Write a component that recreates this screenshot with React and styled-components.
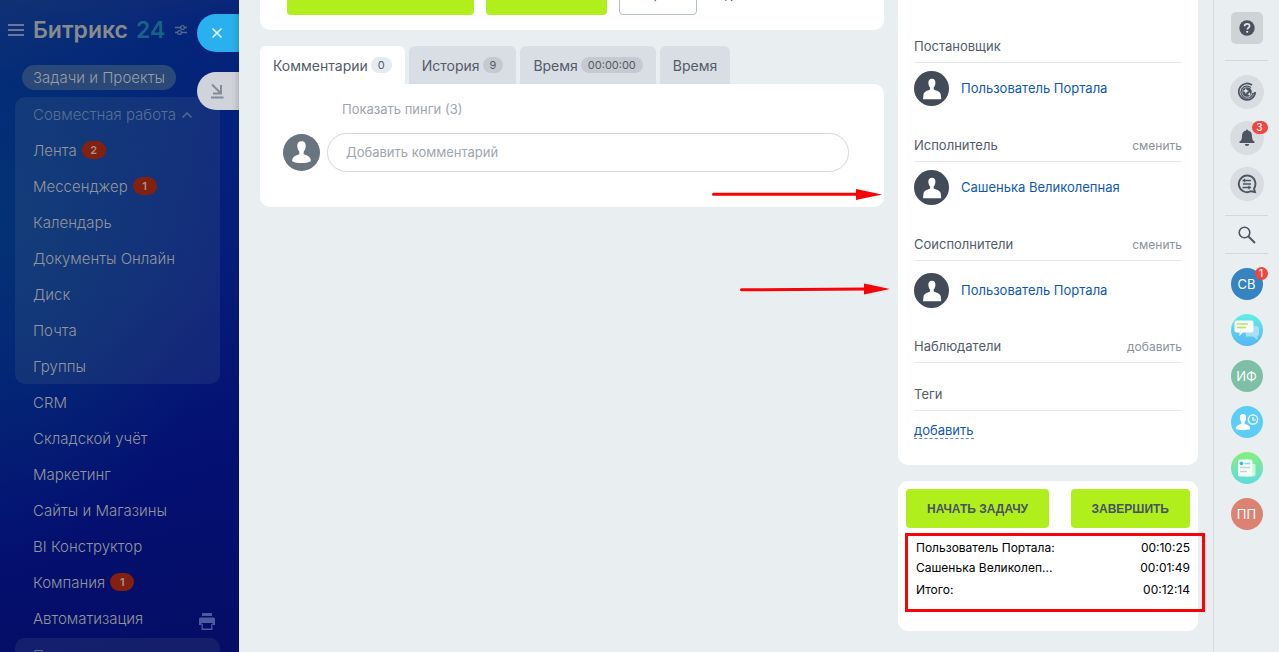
// BASIC
import React from 'react'
import styled, { createGlobalStyle } from 'styled-components'

const GlobalStyle = createGlobalStyle`
	* {
		box-sizing: border-box;
	}
	body {
		margin: 0;
		font-family: Inter, "Open Sans", sans-serif;
		font-size: 13px;
		color: #525c69;
		background: #e9eff1;
	}
	button, input {
		font-family: inherit;
		margin: 0;
	}
	button {
		padding: 0;
		border: 0;
		background: none;
		cursor: pointer;
	}
	a {
		text-decoration: none;
	}
`
const Page = styled.div`
	display: flex;
	height: 100vh;
	overflow: hidden;
`

// SIDEBAR
const Sidebar = styled.aside`
	position: relative;
	flex: 0 0 239px;
	overflow: hidden;
	background:
		radial-gradient(ellipse 220px 340px at 0 220px, rgba(3, 54, 116, 0.8), rgba(3, 48, 116, 0) 100%),
		linear-gradient(165deg, #172e74 0, #04247a 12%, #051d78 45%, #041072 72%, #050d64 100%);
`
const Header = styled.header`
	display: flex;
	align-items: center;
	height: 60px;
	padding-left: 8px;
`
const Logo = styled.a`
	margin: 0 10px 0 9px;
	font-size: 23px;
	font-weight: 600;
	line-height: 30px;
	white-space: nowrap;
	color: #878b8f;
`
const LogoNumber = styled.span`
	margin-left: 8px;
	color: #18628a;
`
const Pill = styled.a`
	display: block;
	width: fit-content;
	height: 25px;
	margin: 5px 0 7px 22px;
	padding: 0 11px;
	border-radius: 13px;
	font-size: 15px;
	font-weight: 300;
	line-height: 25px;
	color: #9a9da1;
	background: #2a4878;
`
const Group = styled.div`
	margin: 0 19px 0 15px;
	padding: 0 18px;
	border-radius: 10px;
	background: ${props => props.$plain ? 'none' : 'rgba(120, 150, 150, 0.13)'};
`
const GroupTitle = styled.button`
	display: flex;
	align-items: center;
	gap: 6px;
	height: 35px;
	font-size: 15px;
	font-weight: 300;
	white-space: nowrap;
	color: #587092;
`
const MenuItem = styled.a`
	display: flex;
	align-items: center;
	gap: 5px;
	height: 36px;
	font-size: 15px;
	font-weight: 300;
	white-space: nowrap;
	color: #92969b;
`
const MenuBadge = styled.span`
	width: 24px;
	height: 18px;
	border-radius: 9px;
	font-size: 11px;
	font-weight: 600;
	line-height: 18px;
	text-align: center;
	color: #a09690;
	background: #84200f;
`
const PrintButton = styled.button`
	position: absolute;
	right: 24px;
	top: 613px;
	width: 16px;
	height: 17px;
`
const PanelTab = styled.button`
	position: absolute;
	right: 0;
	top: ${props => props.$top}px;
	width: 42px;
	height: 38px;
	padding-left: 12px;
	border-radius: 19px 0 0 19px;
	text-align: left;
	background: ${props => props.$primary ? '#2ab0ee' : '#d0d3da'};
	box-shadow: inset -6px 0 6px -5px rgba(0, 0, 0, 0.2);
	svg {
		display: block;
	}
`

// CONTENT
const Content = styled.div`
	display: flex;
	flex: 1;
	gap: 14px;
	min-width: 0;
	padding: 0 15px 0 21px;
`
const Main = styled.main`
	position: relative;
	flex: 1;
	min-width: 0;
`
const ActionsCard = styled.section`
	display: flex;
	align-items: flex-end;
	gap: 12px;
	height: 30px;
	margin-bottom: 16px;
	padding: 0 27px 15px;
	border-radius: 0 0 10px 10px;
	background: #fff;
`
const GreenButton = styled.button`
	flex-shrink: 0;
	height: 39px;
	padding: 0 ${props => props.$pad || 21}px;
	border-radius: 4px;
	font-family: "Liberation Sans", Arial, sans-serif;
	font-size: 12px;
	font-weight: bold;
	white-space: nowrap;
	color: #475263;
	background: #b0ef1c;
`
const OutlineButton = styled(GreenButton)`
	padding: 0 13px 2px;
	border: 1px solid #b6bec6;
	font-family: inherit;
	font-weight: normal;
	background: #fff;
`
const TextButton = styled(OutlineButton)`
	padding: 0 8px 2px;
	border-color: transparent;
	background: none;
`
const Tabs = styled.div`
	display: flex;
	gap: 4px;
	height: 38px;
`
const Tab = styled.button`
	display: flex;
	align-items: center;
	gap: 3px;
	padding: 0 13px;
	border-radius: 6px 6px 0 0;
	font-size: 14px;
	white-space: nowrap;
	color: #525c69;
	background: ${props => props.$active ? '#fff' : '#d9dde4'};
`
const TabCount = styled.span`
	height: 16px;
	padding: 0 7px;
	border-radius: 8px;
	font-size: 11px;
	line-height: 16px;
	background: ${props => props.$active ? '#e6ebf3' : '#c6cad0'};
`
const Comments = styled.section`
	height: 123px;
	padding: 16px 35px 0 23px;
	border-radius: 0 10px 10px 10px;
	background: #fff;
`
const Pings = styled.button`
	display: block;
	height: 18px;
	margin-left: 59px;
	font-size: 13px;
	color: #a0a5ad;
`
const CommentRow = styled.div`
	display: flex;
	align-items: center;
	gap: 7px;
	margin-top: 15px;
`
const CommentInput = styled.input`
	flex: 1;
	min-width: 0;
	height: 39px;
	padding: 0 18px 2px;
	border: 1px solid #d5d8dc;
	border-radius: 20px;
	font-size: 13px;
	background: #fff;
	&::placeholder {
		color: #a0a6ae;
		opacity: 1;
	}
`
const Arrow = styled.svg`
	position: absolute;
	right: ${props => props.$right}px;
	top: ${props => props.$top}px;
	z-index: 2;
`

// DETAILS
const Details = styled.aside`
	flex: 0 0 300px;
`
const PeopleCard = styled.section`
	height: 465px;
	padding: 30px 16px 0;
	border-radius: 0 0 10px 10px;
	background: #fff;
`
const FieldTitle = styled.div`
	display: flex;
	justify-content: space-between;
	align-items: center;
	height: 33px;
	border-bottom: 1px solid #e6e8ea;
`
const Change = styled.button`
	font-size: 12px;
	color: #8c939c;
`
const Person = styled.div`
	display: flex;
	align-items: center;
	gap: 12px;
	height: ${props => props.$tall ? 69 : 66}px;
	padding: ${props => props.$tall ? '12px 0 22px' : '8px 0 23px'};
	a {
		padding-bottom: 2px;
		color: #1058b5;
	}
`
const Spacer = styled.div`
	height: ${props => props.$height}px;
`
const AddTag = styled.a`
	display: inline-block;
	height: 17px;
	margin-top: 11px;
	line-height: 16px;
	color: #1058b5;
	border-bottom: 1px dashed #5a8bcb;
`
const TimerCard = styled.section`
	position: relative;
	height: 150px;
	margin-top: 16px;
	padding: 8px;
	border-radius: 10px;
	background: #fff;
`
const Buttons = styled.div`
	display: flex;
	justify-content: space-between;
`
const TimeTable = styled.table`
	width: 100%;
	margin-top: 9px;
	border-collapse: collapse;
	font-size: 12px;
	color: #000;
	td, th {
		height: 20px;
		padding: 0 0 0 10px;
		font-weight: 400;
		text-align: left;
	}
	td {
		text-align: right;
	}
	tr:last-child > * {
		height: 24px;
	}
`
const Highlight = styled.div`
	position: absolute;
	left: 7px;
	right: -7px;
	top: 52px;
	height: 79px;
	border: 3px solid #f60408;
`

// RAIL
const Rail = styled.nav`
	display: flex;
	flex: 0 0 66px;
	flex-direction: column;
	align-items: center;
	padding-top: 12px;
	border-left: 1px solid #d2d8dc;
`
const Help = styled.button`
	width: 32px;
	height: 32px;
	border-radius: 5px;
	background: #ced3d5;
	svg {
		display: block;
		margin: auto;
	}
`
const Line = styled.div`
	width: 43px;
	height: 1px;
	flex-shrink: 0;
	background: #d3d8db;
`
const RailGroup = styled.div`
	display: flex;
	flex-direction: column;
	gap: ${props => props.$gap}px;
	padding: ${props => props.$padding};
`
const RailButton = styled.button`
	position: relative;
	display: flex;
	align-items: center;
	justify-content: center;
	width: ${props => props.$size || 32}px;
	height: ${props => props.$size || 32}px;
	border-radius: 50%;
	font-size: 13px;
	color: #fff;
	background: ${props => props.$bg};
`
const Count = styled.span`
	position: absolute;
	right: ${props => props.$wide ? -4 : -5}px;
	top: ${props => props.$wide ? 0 : -1}px;
	width: ${props => props.$wide ? 16 : 13}px;
	height: 13px;
	border-radius: 7px;
	font-size: 10px;
	font-weight: 500;
	line-height: 13px;
	text-align: center;
	color: #fff;
	background: #f2453f;
`

const UserIcon = ({ size, bg, round }) => (
	<svg width={size} height={size} viewBox="0 0 36 36" style={{ flexShrink: 0 }}>
		<circle cx="18" cy="18" r="18" fill={bg} />
		{round ? (
			<path fill="#fff" d="M18 7c3 0 4.300 2 4.100 5-.1 2.500-1 4-2 5.200v2.600c3.500 1.500 7 2 7 6.700-4 2.400-14.200 2.400-18.200 0 0-4.700 3.500-5.200 7-6.700v-2.600c-1-1.200-1.900-2.700-2-5.200C13.700 9 15 7 18 7z" />
		) : (
			<path fill="#fff" d="M18.500 8c2.600 0 3.800 2 3.500 4.500-.2 2-.8 3.300-1.700 4.300v2.200c3.200 1.300 6.400 2 7.200 5l.5 5H9.300l.5-5c.8-3 3.700-3.700 6.700-5v-2.200c-1-1-1.500-2.300-1.700-4.300C14.500 10 16 8 18.500 8z" />
		)}
	</svg>
)

const team = [
	{ title: 'Лента', count: 2 },
	{ title: 'Мессенджер', count: 1 },
	{ title: 'Календарь' },
	{ title: 'Документы Онлайн' },
	{ title: 'Диск' },
	{ title: 'Почта' },
	{ title: 'Группы' },
]
const sections = [
	{ title: 'CRM' },
	{ title: 'Складской учёт' },
	{ title: 'Маркетинг' },
	{ title: 'Сайты и Магазины' },
	{ title: 'BI Конструктор' },
	{ title: 'Компания', count: 1 },
	{ title: 'Автоматизация' },
]
const times = [
	['Пользователь Портала:', '00:10:25'],
	['Сашенька Великолеп...', '00:01:49'],
	['Итого:', '00:12:14'],
]

const Menu = ({ items }) => items.map(item => (
	<MenuItem href="#" key={item.title}>
		{item.title}
		{item.count && <MenuBadge>{item.count}</MenuBadge>}
	</MenuItem>
))

const Field = ({ title, action }) => (
	<FieldTitle>
		<span>{title}</span>
		{action && <Change>{action}</Change>}
	</FieldTitle>
)

const App = () => (
	<Page>
		<GlobalStyle />
		<Sidebar>
			<Header>
				<button aria-label="Меню">
					<svg width="16" height="14" viewBox="0 0 16 14" style={{ display: 'block' }}>
						<path d="M0 2h16M0 7h16M0 12h16" stroke="#68779a" strokeWidth="2" />
					</svg>
				</button>
				<Logo href="#">Битрикс<LogoNumber>24</LogoNumber></Logo>
				<svg width="12" height="12" viewBox="0 0 12 12" fill="none" stroke="#53688f" strokeWidth="1.300">
					<path d="M0 3.500h5.500M9.500 3.500H12M0 8.500h2.500M6.500 8.500H12" />
					<circle cx="7.500" cy="3.500" r="1.900" />
					<circle cx="4.500" cy="8.500" r="1.900" />
				</svg>
			</Header>
			<Pill href="#">Задачи и Проекты</Pill>
			<Group>
				<GroupTitle>
					Совместная работа
					<svg width="10" height="6" viewBox="0 0 10 6" fill="none" stroke="#51698c" strokeWidth="1.500">
						<path d="M.5 5.500L5 1l4.500 4.500" />
					</svg>
				</GroupTitle>
				<Menu items={team} />
			</Group>
			<Group $plain>
				<Menu items={sections} />
			</Group>
			<Spacer $height={2} />
			<Group>
				<GroupTitle>Приложения</GroupTitle>
			</Group>
			<PrintButton aria-label="Печать">
				<svg width="16" height="17" viewBox="0 0 16 17" fill="#4c5a9f">
					<path d="M3 0h10v3H3zM1.500 4.500h13a1.500 1.500 0 0 1 1.500 1.500v6h-2.500v-2h-11v2H0V6a1.500 1.500 0 0 1 1.500-1.500z" />
					<path d="M2.500 11h1.300v4.500h8.400V11h1.300v6h-11z" />
				</svg>
			</PrintButton>
			<PanelTab $primary $top={14} aria-label="Закрыть">
				<svg width="16" height="16" viewBox="0 0 16 16">
					<path d="M3.500 3.500l9 9M12.500 3.500l-9 9" stroke="#e6f8ff" strokeWidth="1.600" />
				</svg>
			</PanelTab>
			<PanelTab $top={72} aria-label="Свернуть">
				<svg width="16" height="16" viewBox="0 0 16 16" fill="none" stroke="#858b99" strokeWidth="2">
					<path d="M3 1.500l8.500 8.500M12 2v8.500H4M2 14.500h12.500" />
				</svg>
			</PanelTab>
		</Sidebar>

		<Content>
			<Main>
				<ActionsCard>
					<GreenButton $pad={23}>НАЧАТЬ ВЫПОЛНЕНИЕ</GreenButton>
					<GreenButton $pad={22}>ЗАВЕРШИТЬ</GreenButton>
					<OutlineButton>Закрыть</OutlineButton>
					<TextButton>Удалить</TextButton>
				</ActionsCard>
				<Tabs>
					<Tab $active>Комментарии <TabCount $active>0</TabCount></Tab>
					<Tab>История <TabCount>9</TabCount></Tab>
					<Tab>Время <TabCount>00:00:00</TabCount></Tab>
					<Tab>Время</Tab>
				</Tabs>
				<Comments>
					<Pings>Показать пинги (3)</Pings>
					<CommentRow>
						<UserIcon size={37} bg="#69747f" round />
						<CommentInput type="text" aria-label="Комментарий" placeholder="Добавить комментарий" />
					</CommentRow>
				</Comments>
				<Arrow $right={2} $top={188} width="170" height="13" viewBox="0 0 170 13">
					<path d="M1.500 6.300H146" stroke="#f60408" strokeWidth="3" strokeLinecap="round" />
					<path d="M144 1l26 5.500-26 5.500z" fill="#f60408" />
				</Arrow>
				<Arrow $right={-6} $top={283} width="151" height="13" viewBox="0 0 151 13">
					<path d="M2.500 6.800L127 6" stroke="#f60408" strokeWidth="3" strokeLinecap="round" />
					<path d="M125 .5L151 6l-26 5.500z" fill="#f60408" />
				</Arrow>
			</Main>

			<Details>
				<PeopleCard>
					<Field title="Постановщик" />
					<Person>
						<UserIcon size={35} bg="#434b59" />
						<a href="#">Пользователь Портала</a>
					</Person>
					<Field title="Исполнитель" action="сменить" />
					<Person>
						<UserIcon size={35} bg="#434b59" />
						<a href="#">Сашенька Великолепная</a>
					</Person>
					<Field title="Соисполнители" action="сменить" />
					<Person $tall>
						<UserIcon size={35} bg="#434b59" />
						<a href="#">Пользователь Портала</a>
					</Person>
					<Field title="Наблюдатели" action="добавить" />
					<Spacer $height={15} />
					<Field title="Теги" />
					<AddTag href="#">добавить</AddTag>
				</PeopleCard>
				<TimerCard>
					<Buttons>
						<GreenButton>НАЧАТЬ ЗАДАЧУ</GreenButton>
						<GreenButton>ЗАВЕРШИТЬ</GreenButton>
					</Buttons>
					<TimeTable>
						<tbody>
							{times.map(([name, time]) => (
								<tr key={name}>
									<th scope="row">{name}</th>
									<td>{time}</td>
								</tr>
							))}
						</tbody>
					</TimeTable>
					<Highlight />
				</TimerCard>
			</Details>
		</Content>

		<Rail>
			<Help aria-label="Помощь">
				<svg width="16" height="16" viewBox="0 0 16 16">
					<circle cx="8" cy="8" r="7.700" fill="#4a515e" />
					<path d="M5.600 6.300c0-1.500 1-2.400 2.500-2.400s2.500.9 2.500 2.100c0 1.700-2.300 1.700-2.300 3.400" fill="none" stroke="#e0e4e6" strokeWidth="1.700" />
					<circle cx="8.200" cy="11.800" r="1.100" fill="#e0e4e6" />
				</svg>
			</Help>
			<RailGroup $gap={12} $padding="16px 0 0">
				<Line />
			</RailGroup>
			<RailGroup $gap={12} $padding="14px 0 14px">
				<RailButton $size={34} $bg="#d9dde2" aria-label="CoPilot">
					<svg width="20" height="20" viewBox="0 0 20 20" fill="none">
						<path d="M15 3.200A8.200 8.200 0 1 0 18.200 10" stroke="#4d5563" strokeWidth="1.700" />
						<path d="M14 5.600a6 6 0 1 0 2 5.200c.4 1.800 2.200 1.200 2.200-.8" stroke="#4d5563" strokeWidth="1.200" />
						<circle cx="10" cy="10" r="4.800" fill="#4d5563" />
						<path d="M8.800 6l.9 2.100 2.100.9-2.100.9-.9 2.100-.9-2.100-2.100-.9 2.100-.9zM12.300 10.300l.6 1.200 1.200.6-1.200.6-.6 1.200-.6-1.200-1.200-.6 1.200-.6z" fill="#e3e7eb" />
					</svg>
				</RailButton>
				<RailButton $size={34} $bg="#d9dde2" aria-label="Уведомления">
					<svg width="16" height="18" viewBox="0 0 16 18" fill="#4d5563">
						<path d="M7 1.500a1 1 0 0 1 2 0C12 2 13 4.500 13 7c0 3 .5 4.500 2.500 5.500v1.500H.5v-1.500C2.500 11.500 3 10 3 7c0-2.500 1-5 4-5.500zM5.800 15h4.400a2.200 2 0 0 1-4.400 0z" />
					</svg>
					<Count $wide>3</Count>
				</RailButton>
				<RailButton $size={34} $bg="#d9dde2" aria-label="Чаты">
					<svg width="20" height="20" viewBox="0 0 20 20" fill="none" stroke="#4d5563">
						<path d="M17 14.500A8.300 8.300 0 1 0 14 17.200l4 .8z" strokeWidth="1.900" />
						<path d="M5.500 6.500H14M7.500 4.700v3.600M6 10h8M5.500 13.500H14M12 11.700v3.600" strokeWidth="1.400" />
					</svg>
				</RailButton>
			</RailGroup>
			<Line />
			<RailGroup $gap={0} $padding="3px 0 2px">
				<RailButton $bg="none" aria-label="Поиск">
					<svg width="18" height="18" viewBox="0 0 18 18" fill="none" stroke="#4d5563">
						<circle cx="6.500" cy="6.500" r="5.300" strokeWidth="1.600" />
						<path d="M10.500 10.500l6.500 6.500" strokeWidth="2" />
					</svg>
				</RailButton>
			</RailGroup>
			<Line />
			<RailGroup $gap={14} $padding="14px 0 0">
				<RailButton $bg="#3583c1">СВ<Count>1</Count></RailButton>
				<RailButton $bg="linear-gradient(#63efe3, #55b5f4)" aria-label="Общий чат">
					<svg width="26" height="22" viewBox="0 0 26 22">
						<path d="M12 7h11a2 2 0 0 1 2 2v6a2 2 0 0 1-1.500 2v4l-4-3.500H12z" fill="#a7def8" />
						<path d="M2.500 1.500h15a2 2 0 0 1 2 2v8a2 2 0 0 1-2 2H9L5.500 17v-3.500h-3a2 2 0 0 1-2-2v-8a2 2 0 0 1 2-2z" fill="#f6fdfb" />
						<path d="M3 5h11M3 8.500h9" stroke="#b9e25e" strokeWidth="1.600" />
					</svg>
				</RailButton>
				<RailButton $bg="#7dbfa7">ИФ</RailButton>
				<RailButton $bg="#5ccef6" aria-label="Рабочее время">
					<svg width="24" height="20" viewBox="0 0 24 20">
						<path d="M8 2c2.300 0 3.300 1.500 3.100 4-.1 1.800-.7 3-1.500 4v1.800c2.800 1.100 5.400 1.700 5.600 5.200-3.500 1.500-11 1.500-14.500 0 .2-3.500 3-4.100 5.700-5.200V10C5.500 9 5 7.800 4.900 6 4.700 3.500 5.700 2 8 2z" fill="#fff" />
						<circle cx="18" cy="7.500" r="4.600" fill="none" stroke="#fff" strokeWidth="1.400" />
						<path d="M18 5v3h2.700" fill="none" stroke="#fff" strokeWidth="1.200" />
					</svg>
				</RailButton>
				<RailButton $bg="linear-gradient(#86ef7d, #5fdbe0)" aria-label="Новости">
					<svg width="20" height="20" viewBox="0 0 20 20">
						<path d="M14 6h3.500a1 1 0 0 1 1 1v9a2.500 2.500 0 0 1-2.500 2.500H8z" fill="#c6f6e0" />
						<rect x="1" y="1.500" width="14.500" height="17" rx="2" fill="#f2fdf8" />
						<circle cx="4.500" cy="5.500" r="1.800" fill="#35b8cf" />
						<path d="M7.500 5.500H13" stroke="#80dce6" strokeWidth="1.600" />
						<path d="M3 9.500h10M3 13.500h7" stroke="#c8d3d6" strokeWidth="1.600" />
					</svg>
				</RailButton>
				<RailButton $bg="#dc8272">ПП</RailButton>
			</RailGroup>
		</Rail>
	</Page>
)

export default App
